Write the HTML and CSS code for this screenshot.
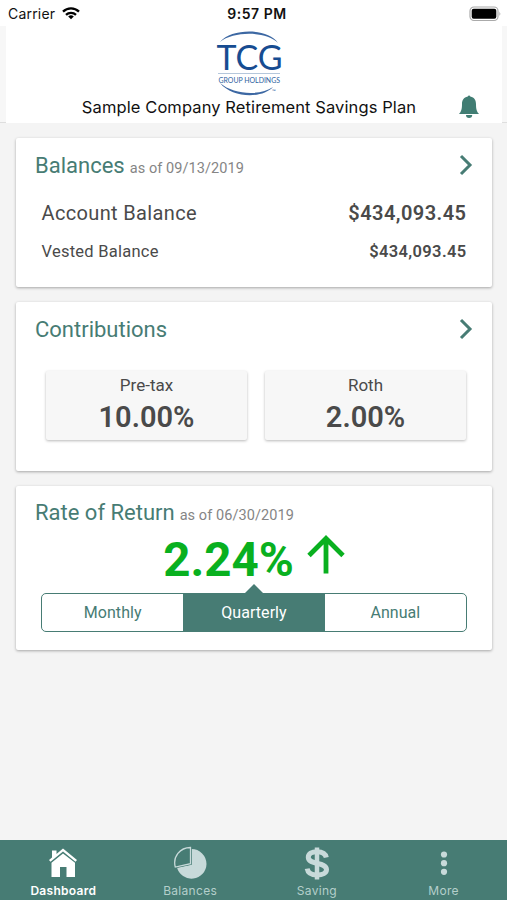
FILE: index.html
```html
<!DOCTYPE html>
<html lang="en">
<head>
  <meta charset="UTF-8" />
  <meta name="viewport" content="width=device-width, initial-scale=1.0"/>
  <title>Retirement Savings Plan</title>
  <link rel="stylesheet" href="styles.css">
</head>
<body>
  <div class="app">
    <div class="status-bar">
      <div class="carrier">
        <span>Carrier</span>
        <svg width="18" height="13" viewBox="0 0 18 13" fill="none" stroke="#000" stroke-width="2.3">
          <path d="M1 4.7a11.5 11.5 0 0 1 16 0M4 7.8a7.2 7.2 0 0 1 10 0"/>
          <path d="M9 12.2 6.2 9.5a4 4 0 0 1 5.6 0z" fill="#000" stroke="none"/>
        </svg>
      </div>
      <div class="time">9:57 PM</div>
      <svg class="battery" width="33" height="16" viewBox="0 0 33 16">
        <rect x="1" y="1" width="28" height="13.5" rx="4" fill="#fff" stroke="#aaa" stroke-width="1.2"/>
        <rect x="2.7" y="2.8" width="24.6" height="9.9" rx="2" fill="#000"/>
        <path d="M30.5 5.5q1.6 2.2 0 4.5z" fill="#999"/>
      </svg>
    </div>

    <header class="header">
      <div class="header-inner">
        <svg class="logo" width="70" height="66" viewBox="0 0 70 66">
          <path d="M6 12C18-2 54-2 64 13C52 1 20 1 6 12z" fill="#3d68a3"/>
          <path d="M6 53C18 68 48 69 59 57C46 66 20 65 6 53z" fill="#3d68a3"/>
          <text x="2.5" y="40" textLength="66" lengthAdjust="spacingAndGlyphs" class="logo-name">TCG</text>
          <path d="M4 43.5h62" stroke="#b5c7db" stroke-width="1"/>
          <text x="4.5" y="52.5" textLength="61.500" lengthAdjust="spacingAndGlyphs" class="logo-sub">GROUP HOLDINGS</text>
          <text x="58" y="63" class="logo-tm">™</text>
        </svg>
        <h1 class="plan-name">Sample Company Retirement Savings Plan</h1>
        <svg class="bell" width="20" height="23" viewBox="0 0 20 23" fill="#417d73">
          <path d="M8.8 1.4a1.3 1.3 0 0 1 2.5 0C15.5 2.3 17 5 17 9.2c0 5 .7 7.2 3 9.8H0c2.3-2.6 3-4.8 3-9.8C3 5 4.600 2.300 8.800 1.400z"/>
          <path d="M7 20h6.200a3.100 3 0 0 1-6.200 0z"/>
        </svg>
      </div>
    </header>

    <main class="content">
      <section class="card balances">
        <div class="card-head">
          <h2>Balances</h2>
          <span class="as-of">as of 09/13/2019</span>
          <svg class="chevron" width="14" height="22" viewBox="0 0 14 22"><path d="m2 2 9 9-9 9"/></svg>
        </div>
        <div class="row account"><span>Account Balance</span><b>$434,093.45</b></div>
        <div class="row vested"><span>Vested Balance</span><b>$434,093.45</b></div>
      </section>

      <section class="card contributions">
        <div class="card-head">
          <h2>Contributions</h2>
          <svg class="chevron" width="14" height="22" viewBox="0 0 14 22"><path d="m2 2 9 9-9 9"/></svg>
        </div>
        <div class="tiles">
          <div class="tile"><span>Pre-tax</span><b>10.00%</b></div>
          <div class="tile"><span>Roth</span><b>2.00%</b></div>
        </div>
      </section>

      <section class="card returns">
        <div class="card-head">
          <h2>Rate of Return</h2>
          <span class="as-of">as of 06/30/2019</span>
        </div>
        <div class="rate">
          <span>2.24%</span>
          <svg width="38" height="39" viewBox="0 0 38 39" fill="none" stroke="#09b01f" stroke-width="4.8">
            <path d="M19 38.5V4M2 20.5 19 3.5l17 17"/>
          </svg>
        </div>
        <div class="tabs">
          <div class="tab">Monthly</div>
          <div class="tab active">Quarterly</div>
          <div class="tab">Annual</div>
        </div>
      </section>
    </main>

    <nav class="nav">
      <div class="nav-item active">
        <svg width="34" height="34" viewBox="0 0 34 34" fill="#fff">
          <path d="M6 4.5h4.5v3.5L17 2.5l14 11.5-1.5 1.7L17 5.5 4.5 15.7 3 14l3-2.5z"/>
          <path d="M17 7.5 5.5 16.8V31h8.500V21h6.500v10h8.500V16.800z"/>
        </svg>
        <span>Dashboard</span>
      </div>
      <div class="nav-item">
        <svg width="34" height="34" viewBox="0 0 34 34">
          <path d="M18.500 3v15.500L4 21.500A15 15 0 0 0 33.500 18 15 15 0 0 0 18.500 3z" fill="#c8dada"/>
          <path d="M17.500 1.500v16.200L2.300 21.100C-.5 10.700 7 1.500 17.500 1.500z" fill="#477c74" stroke="#477c74" stroke-width="2.500"/>
          <path d="M17.500 1.500v16.200L2.300 21.100C-.5 10.700 7 1.500 17.500 1.500z" fill="none" stroke="#c8dada" stroke-width="1.300"/>
        </svg>
        <span>Balances</span>
      </div>
      <div class="nav-item">
        <svg width="34" height="34" viewBox="0 0 34 34" fill="none" stroke="#c8dada">
          <path d="M26.300 11.500C25.500 7.600 22 5.700 17 5.700c-5.300 0-8.700 2.200-8.700 5.600 0 8 18.200 4.300 18.200 12.200 0 3.700-4 5.500-9.300 5.500-5.700 0-9.300-2-10-6.400" stroke-width="5"/>
          <path d="M17 1.500v32" stroke-width="4.500"/>
        </svg>
        <span>Saving</span>
      </div>
      <div class="nav-item">
        <svg width="34" height="34" viewBox="0 0 34 34" fill="#c8dada">
          <circle cx="17" cy="8.500" r="3.100"/><circle cx="17" cy="17.200" r="3.100"/><circle cx="17" cy="25.800" r="3.100"/>
        </svg>
        <span>More</span>
      </div>
    </nav>
  </div>
</body>
</html>
```
FILE: styles.css
```css
* {
  box-sizing: border-box;
}
body {
  margin: 0;
  font-family: Roboto, sans-serif;
  background: #f4f4f4;
  color: #4a4a4a;
}
h1, h2 {
  margin: 0;
  font-weight: 400;
}
svg {
  display: block;
  flex: none;
}
.app {
  height: 900px;
  display: flex;
  flex-direction: column;
}
.status-bar {
  display: grid;
  grid-template-columns: 1fr auto 1fr;
  align-items: center;
  height: 26px;
  padding: 1px 5px 0 8px;
  background: #fff;
  font-family: Inter, sans-serif;
  font-size: 14px;
  color: #111;
}
.carrier {
  display: flex;
  align-items: center;
  gap: 7px;
  letter-spacing: 0.2px;
}
.time {
  padding-left: 4px;
  font-weight: 600;
  letter-spacing: 0.5px;
}
.battery {
  justify-self: end;
}
.header {
  height: 97px;
  padding: 0 5px 0 6px;
  background: #f7f7f7;
  border-bottom: 1px solid #dedede;
}
.header-inner {
  position: relative;
  display: flex;
  flex-direction: column;
  align-items: center;
  height: 97px;
  padding: 4px 10px 0 0;
  background: #fff;
}
.logo {
  overflow: visible;
}
.logo-name {
  font: 34px Lato, sans-serif;
  fill: #174c91;
}
.logo-sub {
  font: 7.5px Lato, sans-serif;
  fill: #2d62a0;
}
.logo-tm {
  font: 5px Lato, sans-serif;
  fill: #2d62a0;
}
.plan-name {
  font-family: Inter, sans-serif;
  font-size: 16.5px;
  line-height: 22px;
  letter-spacing: 0.1px;
  color: #111;
  white-space: nowrap;
}
/* notification icon floats over the header */
.bell {
  position: absolute;
  right: 23px;
  bottom: 5px;
}
.content {
  flex: 1;
  display: flex;
  flex-direction: column;
  gap: 15px;
  padding: 15px 15px 0 16px;
}
.card {
  background: #fff;
  border-radius: 2px;
  box-shadow: 0 1px 3px rgba(0, 0, 0, 0.32);
}
.balances {
  height: 149px;
}
.contributions {
  height: 169px;
}
.returns {
  height: 164px;
}
.card-head {
  display: flex;
  align-items: baseline;
  height: 54px;
  padding: 15px 19px 0;
}
.returns .card-head {
  padding-top: 14px;
}
.card-head h2 {
  font-size: 22px;
  line-height: 26px;
  color: #477c74;
}
.as-of {
  margin-left: 5px;
  font-size: 14.5px;
  letter-spacing: 0.08px;
  color: #858585;
}
.chevron {
  align-self: flex-start;
  margin: 1px 0 0 auto;
  fill: none;
  stroke: #477c74;
  stroke-width: 3;
}
.row {
  display: flex;
  justify-content: space-between;
  align-items: center;
  padding: 0 25.5px;
}
.row b, .tile b {
  font-weight: 600;
}
.account {
  height: 41px;
  font-size: 20px;
  letter-spacing: 0.35px;
}
.account b {
  letter-spacing: 0.45px;
}
.vested {
  height: 37px;
  font-size: 16.5px;
  letter-spacing: 0.25px;
}
.vested b {
  letter-spacing: 0.35px;
}
.tiles {
  display: flex;
  gap: 18px;
  padding: 15px 26px 0 30px;
}
.tile {
  flex: 1;
  display: flex;
  flex-direction: column;
  align-items: center;
  height: 69px;
  padding-top: 4px;
  background: #f7f7f7;
  border-radius: 2px;
  box-shadow: 0 1px 3px rgba(0, 0, 0, 0.28);
}
.tile span {
  font-size: 17px;
  line-height: 21px;
}
.tile b {
  font-size: 29px;
  line-height: 43px;
}
.rate {
  display: flex;
  justify-content: center;
  align-items: flex-start;
  gap: 13px;
  height: 53px;
  margin-top: -5px;
  color: #09b01f;
  font-size: 47.5px;
  font-weight: 700;
  line-height: 50px;
}
.tabs {
  display: flex;
  height: 39px;
  margin: 5px 25px 0;
  border: 1px solid #477c74;
  border-radius: 5px;
}
.tab {
  flex: 1;
  display: flex;
  align-items: center;
  justify-content: center;
  font-size: 16px;
  letter-spacing: 0.05px;
  color: #477c74;
}
.tab.active {
  position: relative;
  background: #477c74;
  color: #fff;
}
/* pointer above the selected tab */
.tab.active::before {
  content: "";
  position: absolute;
  bottom: 100%;
  border: 10px solid transparent;
  border-top: 0;
  border-bottom-color: #477c74;
}
.nav {
  display: flex;
  height: 60px;
  background: #477c74;
}
.nav-item {
  flex: 1;
  display: flex;
  flex-direction: column;
  align-items: center;
  gap: 3px;
  padding-top: 6px;
  font-family: Inter, sans-serif;
  font-size: 12px;
  line-height: 16px;
  letter-spacing: 0.3px;
  color: #b4cfcb;
}
.nav-item.active {
  color: #fff;
  font-weight: 600;
}
```
